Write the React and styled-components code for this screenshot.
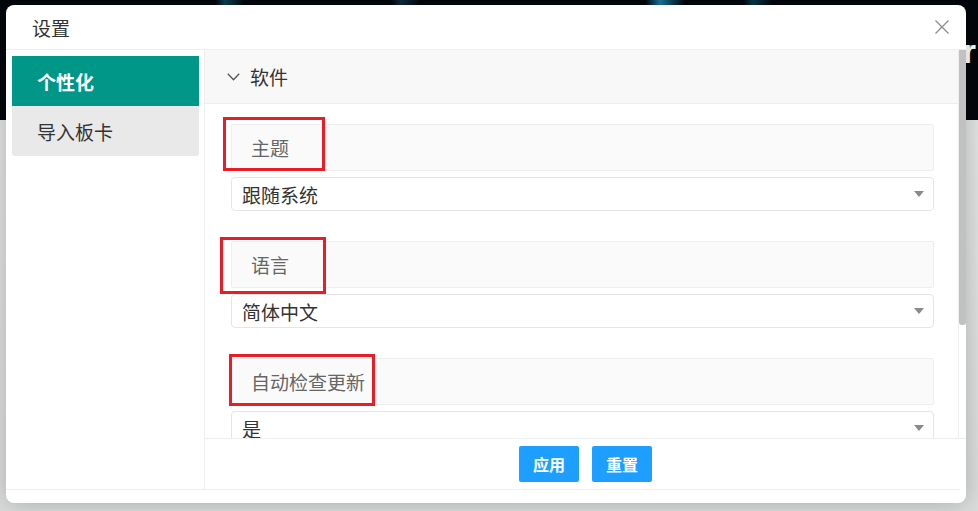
import styled, { createGlobalStyle } from 'styled-components';

const GlobalStyle = createGlobalStyle`
  html, body, #root {
    margin: 0;
    padding: 0;
    width: 100%;
    height: 100%;
    overflow: hidden;
  }
  body {
    font-family: "Noto Sans CJK SC", "Noto Sans", sans-serif;
    color: #333;
  }
`;

const Page = styled.div`
  position: relative;
  width: 100vw;
  height: 100vh;
  display: flex;
  flex-direction: column;
  background: #dedfdf;
`;

const Hero = styled.div`
  height: 120px;
  display: flex;
  justify-content: flex-end;
  align-items: flex-start;
  padding: 32px 2px 0 0;
  box-sizing: border-box;
  background:
    linear-gradient(90deg,
      transparent 0, transparent 22%,
      rgba(20, 110, 150, 0.55) 23%, transparent 25%,
      transparent 40%, rgba(25, 90, 130, 0.45) 41%, transparent 43%,
      transparent 66%, rgba(30, 150, 200, 0.8) 67.5%, transparent 70%,
      transparent 76%, rgba(20, 100, 140, 0.5) 77%, transparent 79%,
      transparent 100%),
    #03070b;
`;

const HeroTitle = styled.span`
  font-family: "Liberation Sans", sans-serif;
  font-weight: bold;
  font-size: 34px;
  color: #fff;
  text-shadow: -2px 0 #29b6e8;
`;

const Rest = styled.div`
  flex: 1;
  background: linear-gradient(180deg, #e2e3e3 0%, #dadbdb 100%);
`;

const Dialog = styled.div`
  position: absolute;
  top: 5px;
  left: 6px;
  width: 960px;
  height: 498px;
  background: #fff;
  border-radius: 8px;
  box-shadow: 0 0 24px rgba(0, 0, 0, 0.22);
  overflow: hidden;
  display: flex;
  flex-direction: column;
`;

const Header = styled.div`
  height: 44px;
  flex-shrink: 0;
  border-bottom: 1px solid #eee;
  display: flex;
  align-items: center;
  justify-content: space-between;
  padding: 0 16px 0 26px;
`;

const Title = styled.span`
  font-size: 19px;
  color: #333;
`;

const Close = styled.button`
  width: 16px;
  height: 16px;
  padding: 0;
  border: 0;
  background: none;
  display: flex;
  cursor: pointer;
`;

const Body = styled.div`
  height: 439px;
  flex-shrink: 0;
  display: flex;
`;

const Bottom = styled.div`
  flex: 1;
  border-top: 1px solid #eee;
  margin-right: 6px;
`;

const Sidebar = styled.div`
  width: 199px;
  flex-shrink: 0;
  border-right: 1px solid #eee;
  padding: 6px 5px 0 6px;
  box-sizing: border-box;
  display: flex;
  flex-direction: column;
`;

const MenuItem = styled.div`
  height: 50px;
  display: flex;
  align-items: center;
  padding-left: 25px;
  font-size: 19px;
  font-weight: ${(p) => (p.$active ? 'bold' : 'normal')};
  color: ${(p) => (p.$active ? '#fff' : '#333')};
  background: ${(p) => (p.$active ? '#009688' : '#e9e9e9')};
  border-radius: ${(p) => (p.$active ? '0' : '0 0 3px 3px')};
`;

const Main = styled.div`
  flex: 1;
  min-width: 0;
  display: flex;
  flex-direction: column;
`;

const ScrollRow = styled.div`
  flex: 1;
  min-height: 0;
  display: flex;
`;

const Scroll = styled.div`
  flex: 1;
  min-width: 0;
  overflow: hidden;
`;

const Track = styled.div`
  width: 8px;
  flex-shrink: 0;
  background: #fff;
  box-shadow: inset 1px 0 0 #eee;
`;

const Thumb = styled.div`
  height: 275px;
  width: 7px;
  margin-left: 1px;
  background: #c1c1c1;
  border-radius: 0 0 3px 3px;
`;

const CollapseTitle = styled.div`
  height: 53px;
  border-bottom: 1px solid #eee;
  background: #f8f8f8;
  display: flex;
  align-items: center;
  gap: 10px;
  padding-left: 22px;
  font-size: 19px;
  color: #333;
`;

const Content = styled.div`
  padding: 20px 24px 0 26px;
`;

const Field = styled.div`
  position: relative;
  margin-bottom: 30px;
`;

const Label = styled.div`
  height: 45px;
  border: 1px solid #eee;
  border-radius: 2px;
  background: #fafafa;
  display: flex;
  align-items: center;
  padding-left: 19px;
  font-size: 19px;
  color: #666;
`;

const Mark = styled.div`
  position: absolute;
  left: ${(p) => p.$x}px;
  top: ${(p) => p.$y}px;
  width: ${(p) => p.$w}px;
  height: ${(p) => p.$h}px;
  border: 3px solid #e81d25;
  box-sizing: border-box;
  pointer-events: none;
`;

const Select = styled.div`
  margin-top: 6px;
  height: 32px;
  border: 1px solid #e8e4e6;
  border-radius: 4px;
  background: #fff;
  display: flex;
  align-items: center;
  justify-content: space-between;
  padding: 0 9px 0 10px;
  font-size: 19px;
  color: #333;
`;

const Caret = styled.span`
  width: 0;
  height: 0;
  border-left: 5px solid transparent;
  border-right: 5px solid transparent;
  border-top: 6px solid #8a8a8a;
`;

const Footer = styled.div`
  height: 50px;
  flex-shrink: 0;
  border-top: 1px solid #eee;
  display: flex;
  align-items: center;
  justify-content: center;
  gap: 13px;
`;

const Button = styled.button`
  width: 60px;
  height: 36px;
  border: 0;
  border-radius: 2px;
  background: #1e9fff;
  color: #fff;
  font-family: inherit;
  font-size: 16px;
  font-weight: bold;
  cursor: pointer;
`;

const fields = [
  { label: '主题', value: '跟随系统', mark: { x: -8, y: -7, w: 102, h: 54 } },
  { label: '语言', value: '简体中文', mark: { x: -11, y: -4, w: 106, h: 57 } },
  { label: '自动检查更新', value: '是', mark: { x: -2, y: -4, w: 146, h: 52 } },
];

const App = () => (
  <>
    <GlobalStyle />
    <Page>
      <Hero>
        <HeroTitle>Manager</HeroTitle>
      </Hero>
      <Rest />
      <Dialog>
        <Header>
          <Title>设置</Title>
          <Close aria-label="关闭">
            <svg width="16" height="16" viewBox="0 0 16 16">
              <path d="M1.5 1.5 L14.5 14.5 M14.5 1.5 L1.5 14.5" stroke="#8c8c8c" strokeWidth="1.2" fill="none" />
            </svg>
          </Close>
        </Header>
        <Body>
          <Sidebar>
            <MenuItem $active>个性化</MenuItem>
            <MenuItem>导入板卡</MenuItem>
          </Sidebar>
          <Main>
            <ScrollRow>
              <Scroll>
                <CollapseTitle>
                  <svg width="13" height="8" viewBox="0 0 13 8">
                    <path d="M0.8 0.8 L6.5 6.8 L12.2 0.8" stroke="#555" strokeWidth="1.3" fill="none" />
                  </svg>
                  软件
                </CollapseTitle>
                <Content>
                  {fields.map((f) => (
                    <Field key={f.label}>
                      <Label>{f.label}</Label>
                      <Select>
                        {f.value}
                        <Caret />
                      </Select>
                      <Mark $x={f.mark.x} $y={f.mark.y} $w={f.mark.w} $h={f.mark.h} />
                    </Field>
                  ))}
                </Content>
              </Scroll>
              <Track>
                <Thumb />
              </Track>
            </ScrollRow>
            <Footer>
              <Button>应用</Button>
              <Button>重置</Button>
            </Footer>
          </Main>
        </Body>
        <Bottom />
      </Dialog>
    </Page>
  </>
);

export default App;
